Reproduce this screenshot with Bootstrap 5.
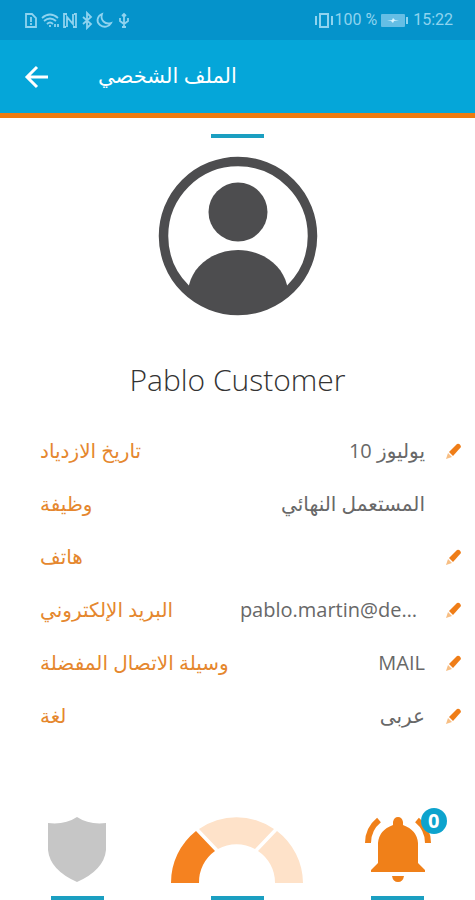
<!DOCTYPE html>
<html lang="ar">
<head>
<meta charset="utf-8">
<meta name="viewport" content="width=device-width, initial-scale=1">
<title>الملف الشخصي</title>
<link href="https://cdn.jsdelivr.net/npm/bootstrap@5.3.0/dist/css/bootstrap.min.css" rel="stylesheet">
<style>
body{font-family:"Noto Sans","DejaVu Sans",sans-serif;color:#686868;overflow-x:hidden;background:#fff}
svg{display:block;flex:none}
.status{height:40px;background:#0593cb;color:#8fd3ef;font:16px/24px Roboto,sans-serif;padding:0 22px 0 24px}
.appbar{height:78px;background:#05a6d9;border-bottom:5px solid #ee7b10;padding:0 24px}
.appbar h1{font-size:21px;line-height:32px}
.title-gap{margin-left:48px;padding-bottom:4px}
.accent{display:block;width:53px;height:4px;background:#1b9fc1}
.username{font-family:"Open Sans",sans-serif;font-weight:300;font-size:30px;line-height:40px;color:#333}
.fields{padding:0 8px 0 40px}
.field-row{height:53px}
.field-name{color:#e5872e;font-size:20px;line-height:32px}
.field-value{font-family:"Open Sans","DejaVu Sans",sans-serif;font-size:20px;line-height:32px}
.edit-slot{width:42px}
.edit-btn{width:28px;height:28px}
.tabs{--bs-gutter-x:6px}
.tab-link{height:84px}
.count{left:100%;top:0;width:26px;height:26px;margin:-8px 0 0 -10px;background:#0da3cd;font:700 20px/26px "Open Sans",sans-serif}
</style>
<script src="https://cdn.jsdelivr.net/npm/bootstrap@5.3.0/dist/js/bootstrap.bundle.min.js"></script>
</head>
<body>
<div class="min-vh-100 d-flex flex-column">
<div class="status d-flex align-items-center justify-content-between">
  <svg width="108" height="20" viewBox="0 0 108 20" fill="none" stroke="currentColor" stroke-width="1.8" aria-hidden="true">
    <path d="M2 4h6l4 4v9H2zM7 7v5M7 13v2"/>
    <path d="M18 8q8-7 16 0M20 11q6-5 12 0M23 14q3-3 6 0M26 15v2M31 14v3M34 14v3"/>
    <path d="M43 4h-3v13h2M43 17V7l6 7V4M49 17h3V4h-2"/>
    <path d="M59 7l8 7-4 4V3l4 4-8 7"/>
    <path d="M78 4c-5 2-6 8-2 11 4 3 9 2 11-2-6 2-11-3-9-9z"/>
    <path d="M100 4v14M98 6l2-2 2 2M96 8v3l4 3 4-3V8M98 17h4"/>
  </svg>
  <div class="d-flex align-items-center">
    <svg width="20" height="20" viewBox="0 0 20 20" fill="none" stroke="currentColor" stroke-width="2" aria-hidden="true"><path d="M6 4h8v13H6zM2 6v9M18 6v9"/></svg>
    <span>100 %</span>
    <svg class="ms-1 me-1" width="28" height="16" viewBox="0 0 28 16" aria-hidden="true"><rect y="2" width="24" height="13" rx="1" fill="#65bee5"/><path d="M25 5h2v7h-2" fill="currentColor"/><path d="M6 9l5-1 1-2 2 2h4l-5 1-1 2-2-2z" fill="#d9f4ff"/></svg>
    <time>15:22</time>
  </div>
</div>
<header class="appbar d-flex align-items-center text-white">
  <button type="button" class="btn p-0 border-0 text-white" aria-label="رجوع"><svg width="26" height="26" viewBox="0 0 26 26" fill="none" stroke="currentColor" stroke-width="3"><path d="M24 13H4M13 3L3 13l10 10"/></svg></button>
  <h1 class="mb-0 fw-normal title-gap" dir="rtl">الملف الشخصي</h1>
</header>
<main class="d-flex flex-column align-items-center pt-3">
  <span class="accent"></span>
  <svg class="mt-3 mb-4" width="160" height="166" viewBox="0 1 160 166" role="img" aria-label="Pablo Customer">
    <defs><clipPath id="disc"><circle cx="80" cy="83" r="78"/></clipPath></defs>
    <circle cx="80" cy="83" r="74.5" fill="none" stroke="#4d4d4f" stroke-width="9.5"/>
    <circle cx="80" cy="59" r="29.5" fill="#4d4d4f"/>
    <path clip-path="url(#disc)" fill="#4d4d4f" d="M31 132C36 111 57 97 80 97s44 14 49 35v31H31z"/>
  </svg>
  <h2 class="username mt-3 mb-0">Pablo Customer</h2>
  <div class="fields w-100 mt-4">
    <div class="field-row d-flex align-items-center"><span class="field-name" dir="rtl">تاريخ الازدياد</span><span class="field-value ms-auto" dir="rtl">يوليوز 10</span><span class="edit-slot d-flex justify-content-end"><button type="button" class="btn border-0 p-0 edit-btn" aria-label="تعديل تاريخ الازدياد"><svg width="28" height="28" viewBox="0 0 28 28"><use href="#pencil"/></svg></button></span></div>
    <div class="field-row d-flex align-items-center"><span class="field-name" dir="rtl">وظيفة</span><span class="field-value ms-auto" dir="rtl">المستعمل النهائي</span><span class="edit-slot"></span></div>
    <div class="field-row d-flex align-items-center"><span class="field-name" dir="rtl">هاتف</span><span class="edit-slot ms-auto d-flex justify-content-end"><button type="button" class="btn border-0 p-0 edit-btn" aria-label="تعديل هاتف"><svg width="28" height="28" viewBox="0 0 28 28"><use href="#pencil"/></svg></button></span></div>
    <div class="field-row d-flex align-items-center"><span class="field-name" dir="rtl">البريد الإلكتروني</span><span class="field-value ms-auto pe-2">pablo.martin@de…</span><span class="edit-slot d-flex justify-content-end"><button type="button" class="btn border-0 p-0 edit-btn" aria-label="تعديل البريد الإلكتروني"><svg width="28" height="28" viewBox="0 0 28 28"><use href="#pencil"/></svg></button></span></div>
    <div class="field-row d-flex align-items-center"><span class="field-name" dir="rtl">وسيلة الاتصال المفضلة</span><span class="field-value ms-auto">MAIL</span><span class="edit-slot d-flex justify-content-end"><button type="button" class="btn border-0 p-0 edit-btn" aria-label="تعديل وسيلة الاتصال المفضلة"><svg width="28" height="28" viewBox="0 0 28 28"><use href="#pencil"/></svg></button></span></div>
    <div class="field-row d-flex align-items-center"><span class="field-name" dir="rtl">لغة</span><span class="field-value ms-auto" dir="rtl">عربى</span><span class="edit-slot d-flex justify-content-end"><button type="button" class="btn border-0 p-0 edit-btn" aria-label="تعديل لغة"><svg width="28" height="28" viewBox="0 0 28 28"><use href="#pencil"/></svg></button></span></div>
  </div>
</main>
<nav class="mt-auto">
  <div class="row tabs">
    <div class="col"><a href="#shield" class="tab-link d-flex flex-column align-items-center justify-content-between" aria-label="الحماية">
      <svg width="60" height="67" viewBox="0 0 60 67"><path fill="#c6c6c6" d="M1 7q17 2 29-6 12 8 29 6v27q-2 20-29 32Q3 54 1 34z"/></svg><span class="accent"></span></a></div>
    <div class="col"><a href="#usage" class="tab-link d-flex flex-column align-items-center justify-content-between" aria-label="الاستهلاك">
      <svg width="134" height="67" viewBox="0 0 134 67"><path fill="#f58220" d="M1 67A66 66 0 0 1 26 15L45 35A38 38 0 0 0 29 67z"/><path fill="#fee2c9" d="M29 13A66 66 0 0 1 104 13L85 33A38 38 0 0 0 48 33zM107 15A66 66 0 0 1 133 67H105A38 38 0 0 0 88 35z"/></svg><span class="accent"></span></a></div>
    <div class="col"><a href="#alerts" class="tab-link d-flex flex-column align-items-center justify-content-between text-white text-decoration-none" aria-label="التنبيهات 0">
      <span class="position-relative"><svg width="66" height="67" viewBox="0 0 66 67" fill="#f08019"><path d="M28 9V6q1-5 5-5t5 5v3q14 5 15 18v20l7 7v2H6v-2l7-7V27Q14 14 28 9zM27 60h12q-1 6-6 6t-6-6z"/><path fill="none" stroke="#f08019" stroke-width="6" d="M3 27Q3 13 14 4M63 27Q63 13 52 4"/></svg><span class="count position-absolute rounded-circle text-center">0</span></span><span class="accent"></span></a></div>
  </div>
</nav>
</div>
<svg width="0" height="0" class="position-absolute" aria-hidden="true"><defs><g id="pencil"><path fill="#ef7d17" d="M10 15l8-8q3-1 4 3l-8 9z"/><path fill="#f7be83" d="M9 16l4 4-6 2z"/></g></defs></svg>
</body>
</html>
